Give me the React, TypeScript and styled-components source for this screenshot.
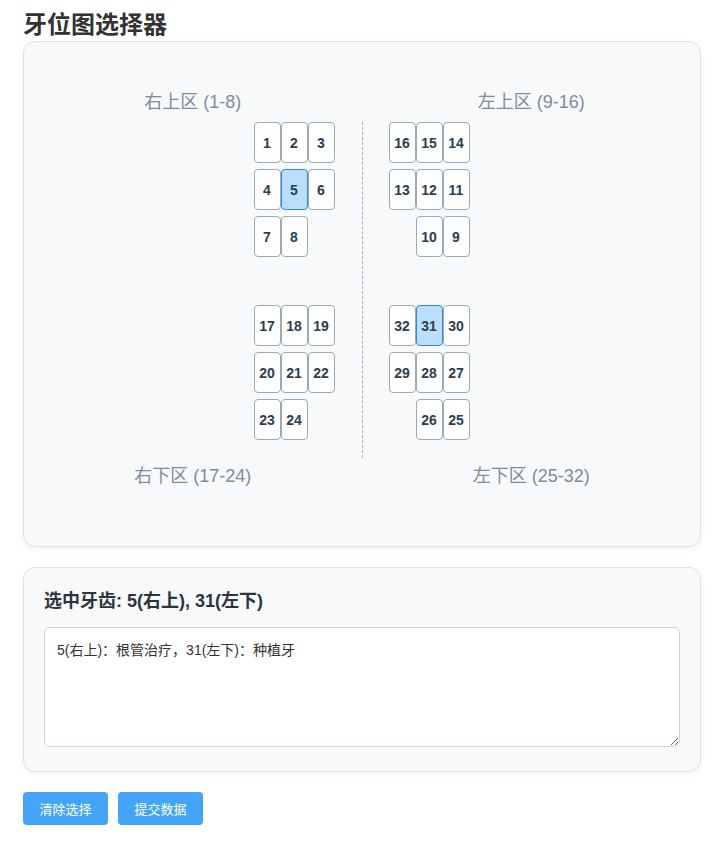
import React, { useState } from "react";
import styled, { createGlobalStyle } from "styled-components";

const GlobalStyle = createGlobalStyle`
  html, body { margin: 0; padding: 0; background: #ffffff; }
  body {
    font-family: "Liberation Sans", "Noto Sans CJK SC", sans-serif;
    color: #333333;
  }
  * { box-sizing: border-box; }
`;

const Page = styled.div`
  padding: 10px 18px 24px 23px;
`;

const Title = styled.h1`
  margin: 0 0 1px;
  font-size: 24px;
  line-height: 30px;
  font-weight: 700;
  color: #333333;
`;

const Card = styled.section`
  background: #f8f9fa;
  border: 1px solid #dfe2e5;
  border-radius: 12px;
  box-shadow: 0 2px 6px rgba(0, 0, 0, 0.05);
`;

const ChartCard = styled(Card)`
  padding: 49px 0 59px;
`;

const Chart = styled.div`
  display: grid;
  grid-template-columns: 1fr 1px 1fr;
  grid-template-rows: auto auto auto auto;
`;

const QuadLabel = styled.div<{ $col: number; $row: number; $lower?: boolean }>`
  grid-column: ${(p) => p.$col};
  grid-row: ${(p) => p.$row};
  text-align: center;
  font-size: 18px;
  line-height: 22px;
  color: #7f8c9b;
  ${(p) => (p.$lower ? "padding-top: 7px;" : "padding-bottom: 9px;")}
`;

const Divider = styled.div`
  grid-column: 2;
  grid-row: 2 / 4;
  border-left: 1px dashed #a4b0bc;
`;

const TeethGrid = styled.div<{ $col: number; $row: number; $side: "left" | "right" }>`
  grid-column: ${(p) => p.$col};
  grid-row: ${(p) => p.$row};
  justify-self: ${(p) => (p.$side === "left" ? "end" : "start")};
  ${(p) => (p.$side === "left" ? "margin-right: 27px;" : "margin-left: 26px;")}
  margin-bottom: ${(p) => (p.$row === 2 ? "48px" : "18px")};
  display: grid;
  grid-template-columns: repeat(3, 27px);
  grid-auto-rows: 41px;
  row-gap: 6px;
  align-self: start;
`;

const Tooth = styled.button<{ $selected: boolean; $start?: number }>`
  ${(p) => (p.$start ? `grid-column-start: ${p.$start};` : "")}
  width: 27px;
  height: 41px;
  padding: 0;
  margin: 0;
  border: 1px solid ${(p) => (p.$selected ? "#2b8be6" : "#9aabb6")};
  border-radius: 4px;
  background: ${(p) => (p.$selected ? "#bbdefb" : "#ffffff")};
  color: #2c3e50;
  font-family: "Liberation Sans", sans-serif;
  font-size: 14px;
  font-weight: 700;
  cursor: pointer;
`;

const InfoCard = styled(Card)`
  margin-top: 20px;
  padding: 21px 20px 24px;
`;

const InfoTitle = styled.h3`
  margin: 0 0 14px;
  font-size: 18px;
  line-height: 24px;
  font-weight: 700;
  color: #2c3440;
`;

const Notes = styled.textarea`
  display: block;
  width: 100%;
  height: 120px;
  padding: 12px;
  border: 1px solid #d0d5db;
  border-radius: 6px;
  background: #ffffff;
  font-family: "Liberation Sans", "Noto Sans CJK SC", sans-serif;
  font-size: 14px;
  line-height: 20px;
  color: #333333;
  resize: vertical;
  outline: none;
`;

const Actions = styled.div`
  display: flex;
  gap: 10px;
  margin-top: 20px;
`;

const ActionButton = styled.button`
  height: 33px;
  padding: 0 16.5px;
  border: none;
  border-radius: 4px;
  background: #42a5f5;
  color: #ffffff;
  font-family: "Liberation Sans", "Noto Sans CJK SC", sans-serif;
  font-size: 13px;
  cursor: pointer;
`;

type Quad = {
  key: string;
  name: string;
  rows: number[][];
  side: "left" | "right";
  col: number;
  row: number;
  labelRow: number;
  lower: boolean;
};

const quads: Quad[] = [
  { key: "ur", name: "右上区 (1-8)", rows: [[1, 2, 3], [4, 5, 6], [7, 8]], side: "left", col: 1, row: 2, labelRow: 1, lower: false },
  { key: "ul", name: "左上区 (9-16)", rows: [[16, 15, 14], [13, 12, 11], [10, 9]], side: "right", col: 3, row: 2, labelRow: 1, lower: false },
  { key: "lr", name: "右下区 (17-24)", rows: [[17, 18, 19], [20, 21, 22], [23, 24]], side: "left", col: 1, row: 3, labelRow: 4, lower: true },
  { key: "ll", name: "左下区 (25-32)", rows: [[32, 31, 30], [29, 28, 27], [26, 25]], side: "right", col: 3, row: 3, labelRow: 4, lower: true },
];

const quadName = (n: number) =>
  n <= 8 ? "右上" : n <= 16 ? "左上" : n <= 24 ? "右下" : "左下";

export default function App() {
  const [selected, setSelected] = useState<number[]>([5, 31]);
  const [notes, setNotes] = useState("5(右上)：根管治疗，31(左下)：种植牙");

  const toggle = (n: number) =>
    setSelected((s) => (s.includes(n) ? s.filter((x) => x !== n) : [...s, n].sort((a, b) => a - b)));

  const summary = selected.length
    ? selected.map((n) => `${n}(${quadName(n)})`).join(", ")
    : "无";

  return (
    <Page>
      <GlobalStyle />
      <Title>牙位图选择器</Title>
      <ChartCard>
        <Chart>
          {quads.map((q) => (
            <QuadLabel key={q.key + "-label"} $col={q.col} $row={q.labelRow} $lower={q.lower}>
              {q.name}
            </QuadLabel>
          ))}
          <Divider />
          {quads.map((q) => (
            <TeethGrid key={q.key} $col={q.col} $row={q.row} $side={q.side}>
              {q.rows.map((r) =>
                r.map((n, i) => (
                  <Tooth
                    key={n}
                    $selected={selected.includes(n)}
                    $start={q.side === "right" && r.length === 2 && i === 0 ? 2 : undefined}
                    onClick={() => toggle(n)}
                  >
                    {n}
                  </Tooth>
                ))
              )}
            </TeethGrid>
          ))}
        </Chart>
      </ChartCard>
      <InfoCard>
        <InfoTitle>选中牙齿: {summary}</InfoTitle>
        <Notes value={notes} onChange={(e) => setNotes(e.target.value)} />
      </InfoCard>
      <Actions>
        <ActionButton onClick={() => setSelected([])}>清除选择</ActionButton>
        <ActionButton>提交数据</ActionButton>
      </Actions>
    </Page>
  );
}
